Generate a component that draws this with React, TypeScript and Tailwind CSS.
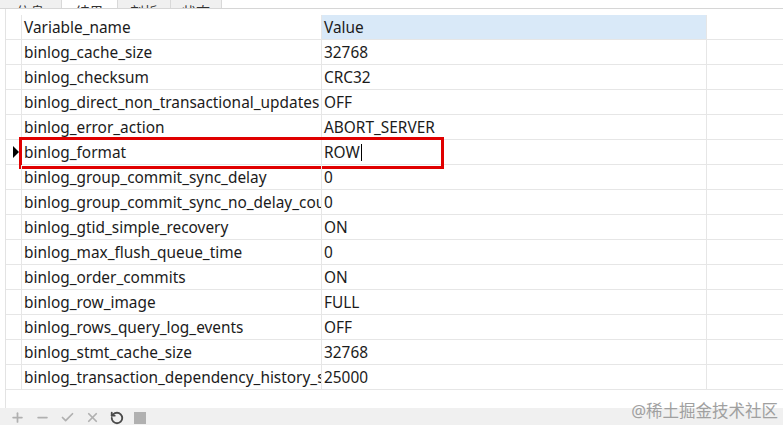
import { Plus, Minus, Check, X, RotateCw } from "lucide-react";

const rows: [string, string][] = [
  ["binlog_cache_size", "32768"],
  ["binlog_checksum", "CRC32"],
  ["binlog_direct_non_transactional_updates", "OFF"],
  ["binlog_error_action", "ABORT_SERVER"],
  ["binlog_format", "ROW"],
  ["binlog_group_commit_sync_delay", "0"],
  ["binlog_group_commit_sync_no_delay_count", "0"],
  ["binlog_gtid_simple_recovery", "ON"],
  ["binlog_max_flush_queue_time", "0"],
  ["binlog_order_commits", "ON"],
  ["binlog_row_image", "FULL"],
  ["binlog_rows_query_log_events", "OFF"],
  ["binlog_stmt_cache_size", "32768"],
  ["binlog_transaction_dependency_history_size", "25000"],
];

const tabs = [
  { label: "信息", active: false, w: "w-[62px]" },
  { label: "结果", active: true, w: "w-[56px]" },
  { label: "剖析", active: false, w: "w-[53px]" },
  { label: "状态", active: false, w: "w-[51px]" },
];

export default function App() {
  return (
    <div className="relative h-[425px] w-[783px] overflow-hidden bg-white font-['Noto_Sans','Noto_Sans_CJK_SC',sans-serif] text-[15.4px] text-[#1b1b1b]">
      {/* tabs, mostly scrolled off the top */}
      <div className="flex h-[9px] items-end border-b border-[#d6d6d6]">
        {tabs.map((t) => (
          <div
            key={t.label}
            className={`flex h-[30px] ${t.w} shrink-0 items-end justify-center overflow-hidden border-r border-[#d9d9d9] text-[14px] leading-[18px] ${
              t.active ? "bg-white" : "bg-[#f0f0f0]"
            }`}
          >
            <span className="translate-y-[13px] text-[#333]">{t.label}</span>
          </div>
        ))}
      </div>

      {/* grid */}
      <div className="ml-[5px] flex h-[399px] flex-col border-l border-[#e3e3e3] pt-[6px]">
        <div className="flex h-[25px] border-b border-[#e6e6e6]">
          <div className="w-[15px] shrink-0" />
          <div className="flex w-[300px] shrink-0 items-center border-l border-[#e6e6e6] pl-[2px] pt-[1px]">Variable_name</div>
          <div className="flex w-[386px] shrink-0 items-center border-l border-r border-[#e6e6e6] bg-[#d9e9f8] pl-[2px] pt-[1px]">Value</div>
        </div>
        {rows.map(([name, value], i) => (
          <div key={name} className="relative flex h-[25px] border-b border-[#e6e6e6]">
            <div className="flex w-[15px] shrink-0 items-center justify-end pr-[2px]">
              {i === 4 && (
                <div className="h-0 w-0 border-y-[6px] border-l-[6px] border-y-transparent border-l-black" />
              )}
            </div>
            <div className="flex w-[300px] shrink-0 items-center overflow-hidden whitespace-nowrap border-l border-[#e6e6e6] pl-[2px] pt-[1px]">
              {name}
            </div>
            <div className="flex w-[386px] shrink-0 items-center border-l border-r border-[#e6e6e6] pl-[2px] pt-[1px]">
              {value}
              {i === 4 && <span className="ml-[1px] h-[17px] w-px bg-black" />}
            </div>
            {i === 4 && (
              <div className="absolute left-[13px] top-[-3px] h-[32px] w-[425px] border-[3px] border-[#e00000]" />
            )}
          </div>
        ))}
        <div className="flex-1" />
      </div>

      {/* bottom toolbar */}
      <div className="flex h-[17px] items-end gap-[10px] bg-[#f0f0f0] pb-[0px] pl-[10px] text-[#b0b0b0]">
        <Plus size={15} strokeWidth={2.8} />
        <Minus size={15} strokeWidth={2.8} />
        <Check size={15} strokeWidth={2.8} />
        <X size={15} strokeWidth={2.8} />
        <RotateCw size={14} strokeWidth={3.2} className="-scale-x-100 text-[#4a4a4a]" />
        <div className="mb-[1px] h-[12px] w-[12px] bg-[#b0b0b0]" />
      </div>
      <span className="absolute right-[5px] top-[401px] text-[16.5px] leading-[20px] text-[#a0a0a0]">@稀土掘金技术社区</span>
    </div>
  );
}
